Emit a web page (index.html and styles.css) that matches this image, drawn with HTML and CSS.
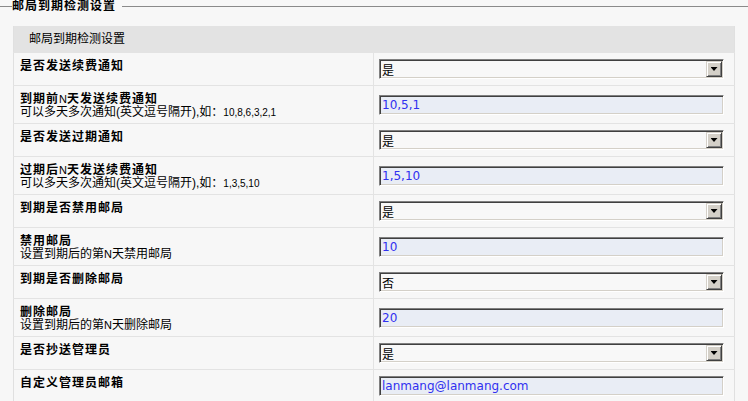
FILE: index.html
```html
<!DOCTYPE html>
<html lang="zh-CN">
<head>
    <meta charset="UTF-8">
    <title>邮局到期检测设置</title>
    <link rel="stylesheet" href="styles.css">
</head>
<body>
    <fieldset class="panel">
        <legend>邮局到期检测设置</legend>
        <table class="settings">
            <colgroup><col class="col-label"><col></colgroup>
            <tr><th colspan="2">邮局到期检测设置</th></tr>
            <tr>
                <td class="label"><b>是否发送续费通知</b></td>
                <td class="value">
                    <div class="combo"><select name="renew_notify"><option>是</option><option>否</option></select><span class="drop"></span></div>
                </td>
            </tr>
            <tr>
                <td class="label"><b>到期前<span class="n">N</span>天发送续费通知</b><span class="hint">可以多天多次通知(英文逗号隔开),如：<span class="num">10,8,6,3,2,1</span></span></td>
                <td class="value"><input class="text" type="text" name="renew_days" value="10,5,1"></td>
            </tr>
            <tr>
                <td class="label"><b>是否发送过期通知</b></td>
                <td class="value">
                    <div class="combo"><select name="expire_notify"><option>是</option><option>否</option></select><span class="drop"></span></div>
                </td>
            </tr>
            <tr>
                <td class="label"><b>过期后<span class="n">N</span>天发送续费通知</b><span class="hint">可以多天多次通知(英文逗号隔开),如：<span class="num">1,3,5,10</span></span></td>
                <td class="value"><input class="text" type="text" name="expire_days" value="1,5,10"></td>
            </tr>
            <tr>
                <td class="label"><b>到期是否禁用邮局</b></td>
                <td class="value">
                    <div class="combo"><select name="disable_on_expire"><option>是</option><option>否</option></select><span class="drop"></span></div>
                </td>
            </tr>
            <tr>
                <td class="label"><b>禁用邮局</b><span class="hint">设置到期后的第<span class="n">N</span>天禁用邮局</span></td>
                <td class="value"><input class="text" type="text" name="disable_days" value="10"></td>
            </tr>
            <tr>
                <td class="label"><b>到期是否删除邮局</b></td>
                <td class="value">
                    <div class="combo"><select name="delete_on_expire"><option>否</option><option>是</option></select><span class="drop"></span></div>
                </td>
            </tr>
            <tr>
                <td class="label"><b>删除邮局</b><span class="hint">设置到期后的第<span class="n">N</span>天删除邮局</span></td>
                <td class="value"><input class="text" type="text" name="delete_days" value="20"></td>
            </tr>
            <tr>
                <td class="label"><b>是否抄送管理员</b></td>
                <td class="value">
                    <div class="combo"><select name="cc_admin"><option>是</option><option>否</option></select><span class="drop"></span></div>
                </td>
            </tr>
            <tr>
                <td class="label"><b>自定义管理员邮箱</b></td>
                <td class="value"><input class="text" type="text" name="admin_mail" value="lanmang@lanmang.com"></td>
            </tr>
        </table>
    </fieldset>
</body>
</html>
```

FILE: styles.css
```css
body {
    margin: 0;
    background: #f7f7f7;
    color: #000;
    font-family: "Liberation Sans", "Noto Sans CJK SC", sans-serif;
    font-size: 12px;
    line-height: 13px;
}
.panel {
    margin: 0;
    padding: 13px 13px 0 13px;
    border: 0;
    border-top: 1px solid #8a8a8a;
    min-width: 0;
}
.panel legend {
    margin-left: -1px;
    padding: 0 6px 0 0;
    font-weight: bold;
    letter-spacing: 1px;
    line-height: 13px;
}
.settings {
    width: 100%;
    border-collapse: collapse;
    table-layout: fixed;
    border-left: 1px solid #e0e0e0;
    border-right: 1px solid #e0e0e0;
}
.col-label {
    width: 360px;
}
.settings th {
    height: 26px;
    padding: 0 15px;
    background: #e3e3e3;
    text-align: left;
    font-weight: normal;
}
.settings td {
    border-top: 1px solid #e3e3e3;
}
td.label {
    vertical-align: top;
    padding: 6px 6px 4px;
}
td.label b {
    display: block;
    height: 14px;
    line-height: 14px;
    letter-spacing: 1px;
    white-space: nowrap;
}
td.label .hint {
    display: block;
    height: 13px;
    line-height: 13px;
    white-space: nowrap;
}
/* latin bits inside the chinese labels are narrower */
td.label .n {
    font-weight: normal;
    font-size: 11px;
    letter-spacing: 0;
}
td.label .num {
    font-size: 10px;
}
td.value {
    border-left: 1px solid #e3e3e3;
    padding: 6px 10px 6px 5px;
    vertical-align: middle;
}
.combo {
    display: flex;
    height: 20px;
    box-sizing: border-box;
    border: 1px solid;
    border-color: #808080 #fff #fff #808080;
    box-shadow: inset 1px 1px 0 #404040, inset -1px -1px 0 #d4d0c8;
    background: #f8f8f8;
}
.combo select {
    flex: 1;
    appearance: none;
    -webkit-appearance: none;
    border: 0;
    background: transparent;
    font-family: "Noto Sans CJK SC", sans-serif;
    font-size: 12px;
    padding: 0 2px;
    outline: none;
}
.drop {
    display: flex;
    align-items: center;
    justify-content: center;
    width: 16px;
    height: 16px;
    margin: 1px 1px 0 0;
    box-sizing: border-box;
    background: #d4d0c8;
    border: 1px solid;
    border-color: #d4d0c8 #404040 #404040 #d4d0c8;
    box-shadow: inset 1px 1px 0 #fff, inset -1px -1px 0 #808080;
}
.drop::after {
    content: "";
    width: 7px;
    height: 4px;
    background: #000;
    clip-path: polygon(0 0, 100% 0, 50% 100%);
}
.text {
    display: block;
    width: 100%;
    height: 20px;
    box-sizing: border-box;
    margin: 0;
    padding: 0 2px;
    border: 1px solid;
    border-color: #808080 #fff #fff #808080;
    box-shadow: inset 1px 1px 0 #404040, inset -1px -1px 0 #d4d0c8;
    background: #e9edf5;
    color: #3030f0;
    font-family: "DejaVu Sans", sans-serif;
    font-size: 12px;
    outline: none;
}
```
